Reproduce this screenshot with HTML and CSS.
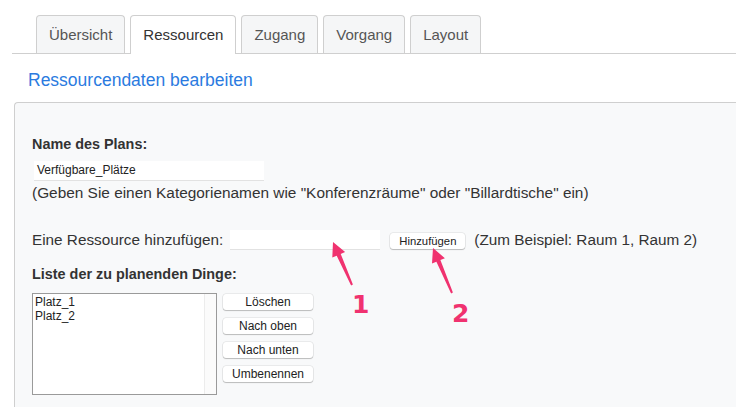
FILE: index.html
```html
<!DOCTYPE html>
<html lang="de">
<head>
<meta charset="utf-8">
<title>Ressourcen</title>
<link rel="stylesheet" href="styles.css">
</head>
<body>
<nav class="tabs">
  <div class="tab">Übersicht</div>
  <div class="tab active">Ressourcen</div>
  <div class="tab">Zugang</div>
  <div class="tab">Vorgang</div>
  <div class="tab">Layout</div>
</nav>
<h2 class="heading">Ressourcendaten bearbeiten</h2>
<section class="panel">
  <div class="label">Name des Plans:</div>
  <div class="field name-field">Verfügbare_Plätze</div>
  <div class="hint">(Geben Sie einen Kategorienamen wie "Konferenzräume" oder "Billardtische" ein)</div>
  <div class="add-row">
    <span class="row-label">Eine Ressource hinzufügen:</span>
    <div class="field add-field"></div>
    <button class="btn add-btn">Hinzufügen</button>
    <span class="row-label">(Zum Beispiel: Raum 1, Raum 2)</span>
  </div>
  <div class="label list-label">Liste der zu planenden Dinge:</div>
  <div class="list-row">
    <div class="listbox">
      <div class="items">
        <div class="item">Platz_1</div>
        <div class="item">Platz_2</div>
      </div>
      <div class="scroll"></div>
    </div>
    <div class="actions">
      <button class="btn">Löschen</button>
      <button class="btn">Nach oben</button>
      <button class="btn">Nach unten</button>
      <button class="btn">Umbenennen</button>
    </div>
  </div>
</section>
<svg class="annot" width="736" height="407" viewBox="0 0 736 407">
  <polygon class="arrow" points="333,242 345.1,252 340.7,253.9 352.9,284.6 351.1,285.4 336.7,255.7 332.3,257.6"/>
  <polygon class="arrow" points="433,248 444.9,258.2 440.4,260 452.9,292.6 451.1,293.4 436.4,261.8 432,263.6"/>
  <text class="num" x="352" y="313">1</text>
  <text class="num" x="452" y="322">2</text>
</svg>
</body>
</html>
```
FILE: styles.css
```css
* { box-sizing: border-box; }
html, body { margin: 0; padding: 0; }
body {
  font-family: "Liberation Sans", Arial, sans-serif;
  color: #333;
  background: #fff;
  width: 736px;
  height: 407px;
  overflow: hidden;
  position: relative;
}
.tabs {
  display: flex;
  align-items: flex-end;
  gap: 5px;
  margin: 15px 0 0 12px;
  padding-left: 24px;
  border-bottom: 1px solid #cfcfcf;
  height: 39px;
}
.tab {
  height: 38px;
  line-height: 37px;
  padding: 0 12px;
  font-size: 15px;
  color: #555;
  background: #f5f6f7;
  border: 1px solid #cfcfcf;
  border-bottom: none;
  border-radius: 4px 4px 0 0;
}
.tab.active {
  background: #fff;
  color: #333;
  height: 39px;
  margin-bottom: -1px;
}
.heading {
  margin: 16px 0 0 28px;
  font-size: 17.5px;
  line-height: 20px;
  font-weight: normal;
  color: #2b7be0;
}
.panel {
  margin: 12px 0 0 14px;
  padding: 32px 0 0 17px;
  background: #f8f9fa;
  border: 1px solid #cfcfcf;
  border-right: none;
  border-bottom: none;
  border-radius: 4px 0 0 0;
  height: 320px;
}
.label {
  font-size: 14.4px;
  font-weight: bold;
  line-height: 18px;
  color: #333;
}
.field {
  background: #fff;
  height: 19px;
  box-shadow: 0 1px 0 #e2e2e2;
}
.name-field {
  margin: 8px 0 0 2px;
  width: 230px;
  font-size: 12px;
  line-height: 19px;
  padding-left: 3px;
  color: #222;
}
.hint {
  margin-top: 4px;
  font-size: 15.4px;
  line-height: 18px;
}
.add-row {
  margin-top: 28px;
  display: flex;
  align-items: center;
  height: 19px;
}
.row-label {
  font-size: 15.3px;
  line-height: 18px;
}
.add-field {
  width: 150px;
  margin: 0 10px 0 7px;
}
.btn {
  font-family: "Liberation Sans", Arial, sans-serif;
  font-size: 12px;
  color: #222;
  background: #fff;
  border: none;
  border-radius: 3px;
  box-shadow: 0 0 0 0.5px rgba(0,0,0,0.12), 0 1px 1px rgba(0,0,0,0.2);
  height: 16px;
  padding: 0;
  line-height: 16px;
}
.add-btn {
  width: 75px;
  font-size: 11.3px;
  margin-right: 9px;
  margin-top: 2px;
}
.list-label { margin-top: 16px; }
.list-row {
  margin-top: 10px;
  display: flex;
  align-items: flex-start;
}
.listbox {
  width: 185px;
  height: 102px;
  background: #fff;
  border: 1px solid #9a9a9a;
  display: flex;
}
.items {
  flex: 1;
  padding: 1px 2px;
}
.item {
  font-size: 12px;
  line-height: 14px;
  color: #222;
}
.scroll {
  width: 12px;
  border-left: 1px solid #ececec;
  background: #fbfbfb;
}
.actions {
  display: flex;
  flex-direction: column;
  gap: 8px;
  margin: 1px 0 0 6px;
}
.actions .btn { width: 90px; }
.annot {
  position: absolute;
  left: 0;
  top: 0;
  pointer-events: none;
}
.arrow { fill: #f0326f; }
.num {
  fill: #f0326f;
  font-family: "DejaVu Sans", sans-serif;
  font-weight: bold;
  font-size: 25px;
}
```
